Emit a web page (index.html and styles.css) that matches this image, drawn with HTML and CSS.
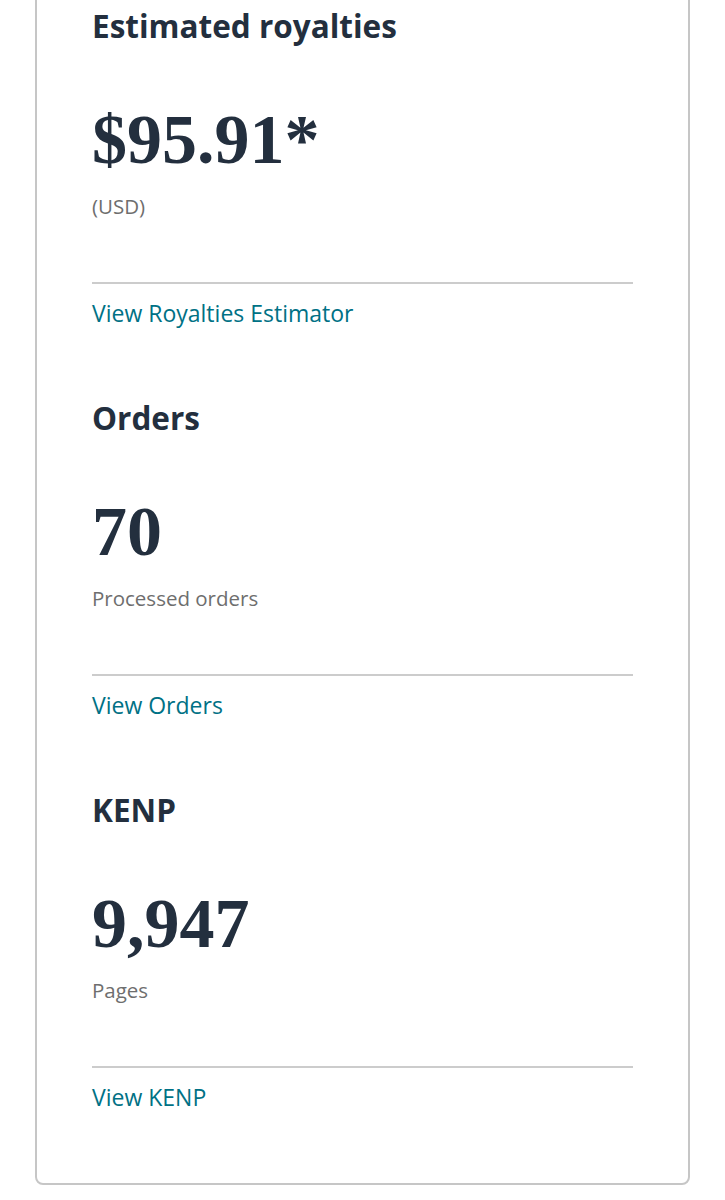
FILE: index.html
```html
<!DOCTYPE html>
<html lang="en">
<head>
<meta charset="utf-8">
<title>KDP Dashboard</title>
<link rel="stylesheet" href="styles.css">
</head>
<body>
<div class="card">
  <section class="metric">
    <h2 class="metric-title">Estimated royalties</h2>
    <div class="metric-value">$95.91*</div>
    <div class="metric-sub">(USD)</div>
    <hr class="divider">
    <a class="metric-link" href="#">View Royalties Estimator</a>
  </section>
  <section class="metric">
    <h2 class="metric-title">Orders</h2>
    <div class="metric-value">70</div>
    <div class="metric-sub">Processed orders</div>
    <hr class="divider">
    <a class="metric-link" href="#">View Orders</a>
  </section>
  <section class="metric">
    <h2 class="metric-title">KENP</h2>
    <div class="metric-value">9,947</div>
    <div class="metric-sub">Pages</div>
    <hr class="divider">
    <a class="metric-link" href="#">View KENP</a>
  </section>
</div>
</body>
</html>
```
FILE: styles.css
```css
html, body {
  margin: 0;
  padding: 0;
  background: #ffffff;
}

body {
  font-family: "Open Sans", "Noto Sans", Arial, sans-serif;
  color: #232f3e;
}

.card {
  margin: -40px 0 0 35px;
  width: 541px;
  padding: 44px 55px 70px 55px;
  border: 2px solid #c6c6c6;
  border-radius: 8px;
  display: flex;
  flex-direction: column;
  gap: 69px;
}

.metric {
  display: flex;
  flex-direction: column;
}

.metric-title {
  margin: 0;
  font-size: 31.5px;
  line-height: 40px;
  font-weight: 700;
  color: #232f3e;
}

.metric-value {
  margin-top: 54px;
  font-family: "Liberation Serif", "Times New Roman", serif;
  font-weight: 700;
  font-size: 70px;
  line-height: 80px;
  color: #232f3e;
}

.metric-sub {
  margin-top: 12px;
  font-size: 20.5px;
  line-height: 28px;
  color: #6e6e6e;
}

.divider {
  margin: 62px 0 0 0;
  border: 0;
  height: 2px;
  background: #cccccc;
}

.metric-link {
  margin-top: 13px;
  font-size: 23px;
  line-height: 32px;
  color: #007185;
  text-decoration: none;
  align-self: flex-start;
}
```
